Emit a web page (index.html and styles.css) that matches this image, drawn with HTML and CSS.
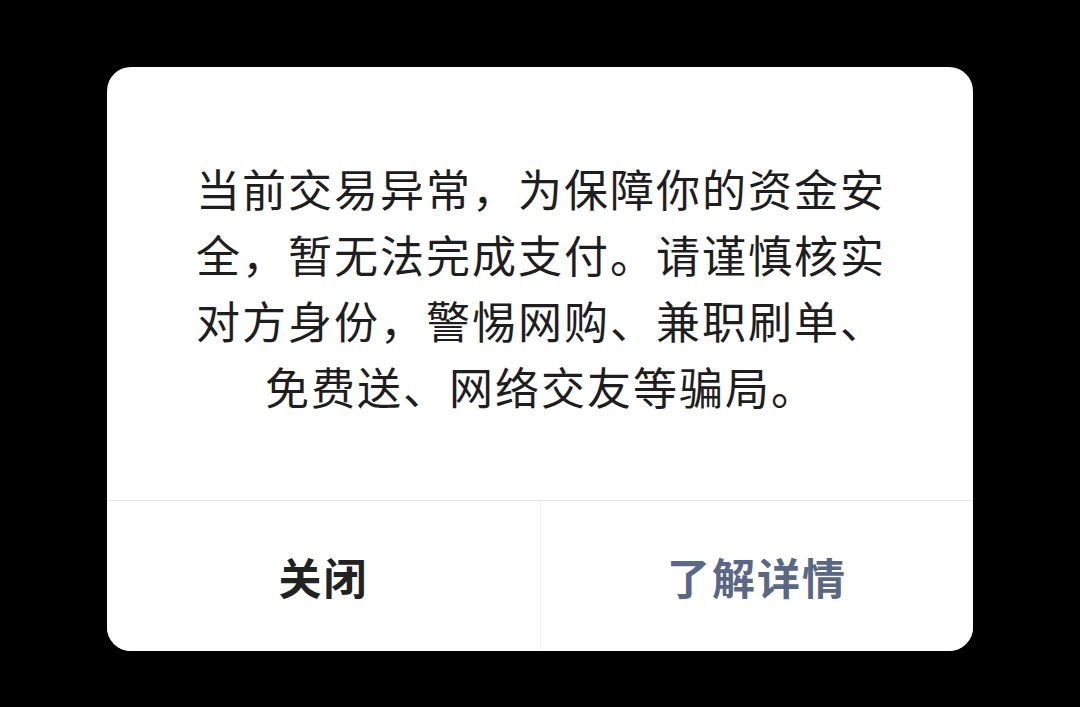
FILE: index.html
```html
<!DOCTYPE html>
<html lang="zh-CN">
<head>
    <meta charset="UTF-8">
    <meta name="viewport" content="width=device-width, initial-scale=1.0">
    <title>支付提示</title>
    <link rel="stylesheet" href="styles.css">
</head>
<body>

    <div class="dialog">
        <div class="message">
            当前交易异常，为保障你的资金安全，暂无法完成支付。请谨慎核实对方身份，警惕网购、兼职刷单、免费送、网络交友等骗局。
        </div>
        <div class="actions">
            <button class="btn close">关闭</button>
            <button class="btn detail">了解详情</button>
        </div>
    </div>

</body>
</html>
```

FILE: styles.css
```css
/* Page backdrop */
body {
    margin: 0;
    height: 100vh;
    background: #000;
    padding-top: 67px;
    box-sizing: border-box;
    font-family: "Noto Sans CJK SC", "Noto Sans", sans-serif;
}

/* Dialog card */
.dialog {
    width: 866px;
    margin: 0 auto;
    background: #fff;
    border-radius: 24px;
    overflow: hidden;
}

/* Message text */
.message {
    padding: 88px 84px 81px 86px;
    font-size: 44px;
    line-height: 66px;
    letter-spacing: 2px;
    color: #1e1e1e;
    text-align: center;
}

/* Button row */
.actions {
    display: grid;
    grid-template-columns: 434px 1fr;
    height: 150px;
    border-top: 1px solid #e8e8e8;
}

.btn {
    border: none;
    background: #fff;
    font-family: inherit;
    font-size: 43px;
    font-weight: bold;
    letter-spacing: 2px;
    cursor: pointer;
    padding: 0;
}

.close {
    color: #222;
    border-right: 1px solid #f0f0f0;
}

.detail {
    color: #5b6787;
}
```
